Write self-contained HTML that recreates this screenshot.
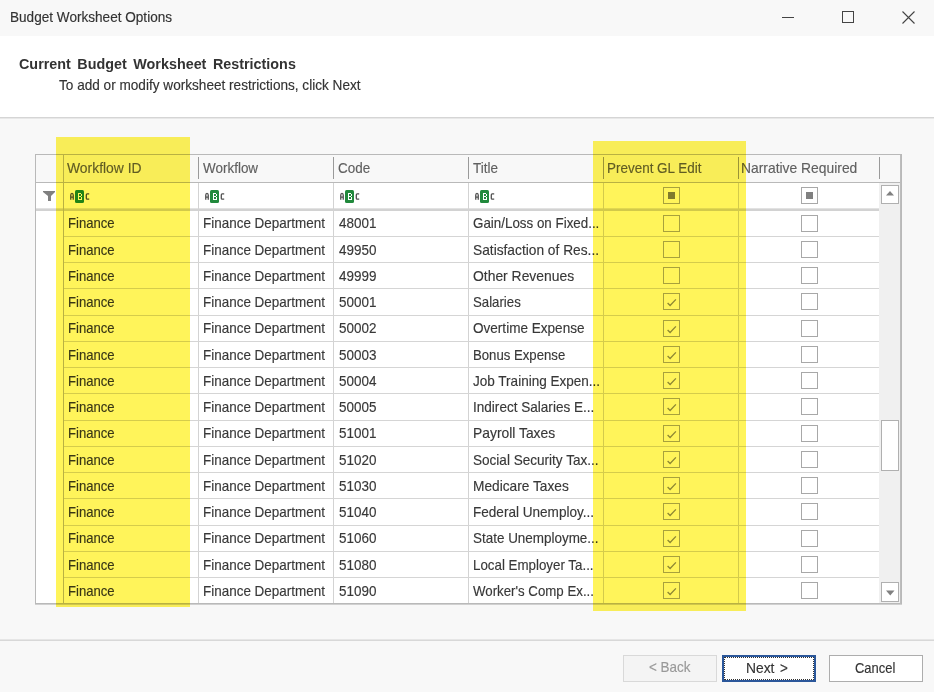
<!DOCTYPE html>
<html><head><meta charset="utf-8"><style>
html,body{margin:0;padding:0;width:934px;height:692px;overflow:hidden;background:#f8f8f8}
body{position:relative;font-family:"Liberation Sans",sans-serif}
.t{position:absolute;white-space:pre;line-height:normal;-webkit-text-stroke:0.15px currentColor}
</style></head><body>
<div style="position:absolute;left:0px;top:0px;width:934px;height:36px;background:#f8f8f8;"></div><div style="position:absolute;left:0px;top:36px;width:934px;height:81px;background:#ffffff;"></div><div style="position:absolute;left:0px;top:117px;width:934px;height:1px;background:#d5d5d5;"></div><div style="position:absolute;left:0px;top:118px;width:934px;height:574px;background:#f8f8f8;"></div><div style="position:absolute;left:0px;top:118px;width:934px;height:1px;background:#e8e8e8;"></div><div class="t" style="left:9.5px;top:9.23px;font-size:14.0px;color:#333;font-weight:normal;letter-spacing:0px;transform:scaleX(0.97);transform-origin:0 0;">Budget Worksheet Options</div><div style="position:absolute;left:782px;top:17px;width:12px;height:1px;background:#444;"></div><div style="position:absolute;left:842px;top:11px;width:10px;height:10px;border:1px solid #444"></div><svg style="position:absolute;left:0;top:0" width="934" height="692"><path d="M902.5,11.5 L914.5,23.5 M914.5,11.5 L902.5,23.5" stroke="#444" stroke-width="1.1" fill="none"/></svg><div class="t" style="left:19px;top:56.01px;font-size:14.8px;color:#333;font-weight:bold;letter-spacing:0px;transform:scaleX(0.97);transform-origin:0 0;word-spacing:2.6px;-webkit-text-stroke:0;">Current Budget Worksheet Restrictions</div><div class="t" style="left:59px;top:76.57px;font-size:14.4px;color:#333;font-weight:normal;letter-spacing:0px;transform:scaleX(0.945);transform-origin:0 0;">To add or modify worksheet restrictions, click Next</div><div style="position:absolute;left:35px;top:154px;width:867px;height:450px;background:#ffffff;box-sizing:border-box;border:1px solid #b9b9b9"></div><div style="position:absolute;left:36px;top:155px;width:865px;height:27px;background:#f8f8f8;"></div><div style="position:absolute;left:36px;top:182px;width:865px;height:1px;background:#b9b9b9;"></div><div style="position:absolute;left:36px;top:208px;width:843px;height:1px;background:#e2e2e2;"></div><div style="position:absolute;left:36px;top:209px;width:843px;height:2px;background:#d2d2d2;"></div><div style="position:absolute;left:63px;top:155px;width:1px;height:448px;background:#b9b9b9;"></div><div style="position:absolute;left:198px;top:157px;width:1px;height:22px;background:#9a9a9a;"></div><div style="position:absolute;left:333px;top:157px;width:1px;height:22px;background:#9a9a9a;"></div><div style="position:absolute;left:468px;top:157px;width:1px;height:22px;background:#9a9a9a;"></div><div style="position:absolute;left:603px;top:157px;width:1px;height:22px;background:#9a9a9a;"></div><div style="position:absolute;left:738px;top:157px;width:1px;height:22px;background:#9a9a9a;"></div><div style="position:absolute;left:879px;top:157px;width:1px;height:22px;background:#9a9a9a;"></div><div style="position:absolute;left:198px;top:183px;width:1px;height:420px;background:#d3d3d3;"></div><div style="position:absolute;left:333px;top:183px;width:1px;height:420px;background:#d3d3d3;"></div><div style="position:absolute;left:468px;top:183px;width:1px;height:420px;background:#d3d3d3;"></div><div style="position:absolute;left:603px;top:183px;width:1px;height:420px;background:#d3d3d3;"></div><div style="position:absolute;left:738px;top:183px;width:1px;height:420px;background:#d3d3d3;"></div><div style="position:absolute;left:64px;top:236px;width:815px;height:1px;background:#d5d5d5;"></div><div style="position:absolute;left:64px;top:262px;width:815px;height:1px;background:#d5d5d5;"></div><div style="position:absolute;left:64px;top:288px;width:815px;height:1px;background:#d5d5d5;"></div><div style="position:absolute;left:64px;top:315px;width:815px;height:1px;background:#d5d5d5;"></div><div style="position:absolute;left:64px;top:341px;width:815px;height:1px;background:#d5d5d5;"></div><div style="position:absolute;left:64px;top:367px;width:815px;height:1px;background:#d5d5d5;"></div><div style="position:absolute;left:64px;top:393px;width:815px;height:1px;background:#d5d5d5;"></div><div style="position:absolute;left:64px;top:420px;width:815px;height:1px;background:#d5d5d5;"></div><div style="position:absolute;left:64px;top:446px;width:815px;height:1px;background:#d5d5d5;"></div><div style="position:absolute;left:64px;top:472px;width:815px;height:1px;background:#d5d5d5;"></div><div style="position:absolute;left:64px;top:498px;width:815px;height:1px;background:#d5d5d5;"></div><div style="position:absolute;left:64px;top:525px;width:815px;height:1px;background:#d5d5d5;"></div><div style="position:absolute;left:64px;top:551px;width:815px;height:1px;background:#d5d5d5;"></div><div style="position:absolute;left:64px;top:577px;width:815px;height:1px;background:#d5d5d5;"></div><div style="position:absolute;left:879px;top:183px;width:21px;height:420px;background:#f0f0f0;"></div><div style="position:absolute;left:900px;top:155px;width:1px;height:449px;background:#bdbdbd;"></div><div style="position:absolute;left:35px;top:604px;width:867px;height:1px;background:#d0d0d0;"></div><div style="position:absolute;left:881px;top:185px;width:18px;height:19px;box-sizing:border-box;border:1px solid #b0b0b0;background:#fff"></div><div style="position:absolute;left:881px;top:420px;width:18px;height:51px;box-sizing:border-box;border:1px solid #b0b0b0;background:#fff"></div><div style="position:absolute;left:881px;top:582px;width:18px;height:20px;box-sizing:border-box;border:1px solid #b0b0b0;background:#fff"></div><svg style="position:absolute;left:0;top:0" width="934" height="692"><path d="M886,195.5 L894,195.5 L890,191 Z" fill="#808080"/><path d="M886,590.5 L894.5,590.5 L890.25,595.5 Z" fill="#808080"/><path d="M43,191 L55,191 L55,192 L51,196 L51,201 L48,201 L48,196 L43,192 Z" fill="#808080"/></svg><div class="t" style="left:67px;top:159.97px;font-size:14.4px;color:#606060;font-weight:normal;letter-spacing:0px;transform:scaleX(0.965);transform-origin:0 0;">Workflow ID</div><div class="t" style="left:202.5px;top:159.97px;font-size:14.4px;color:#606060;font-weight:normal;letter-spacing:0px;transform:scaleX(0.935);transform-origin:0 0;">Workflow</div><div class="t" style="left:337.5px;top:159.97px;font-size:14.4px;color:#606060;font-weight:normal;letter-spacing:0px;transform:scaleX(0.935);transform-origin:0 0;">Code</div><div class="t" style="left:472.5px;top:159.97px;font-size:14.4px;color:#606060;font-weight:normal;letter-spacing:0px;transform:scaleX(0.935);transform-origin:0 0;">Title</div><div class="t" style="left:606.5px;top:159.97px;font-size:14.4px;color:#606060;font-weight:normal;letter-spacing:0px;transform:scaleX(0.935);transform-origin:0 0;">Prevent GL Edit</div><div class="t" style="left:741px;top:159.97px;font-size:14.4px;color:#606060;font-weight:normal;letter-spacing:0px;transform:scaleX(0.963);transform-origin:0 0;">Narrative Required</div><svg style="position:absolute;left:70px;top:189px" width="20" height="14"><path d="M0.75,10.7 V6.3 Q0.75,4.3 2,4.3 Q3.25,4.3 3.25,6.3 V10.7 M0.75,8.1 H3.25" stroke="#505050" stroke-width="1.3" fill="none" shape-rendering="auto"/><rect x="5" y="1" width="9" height="13" rx="1.5" fill="#21893c"/><path d="M8,4h3v1h-3zM8,5h1v6h-1zM11,5h1v2h-1zM9,7h2v1h-2zM11,8h1v2h-1zM8,10h4v1h-4z" fill="#fff" shape-rendering="crispEdges"/><path d="M19.2,4.8 H17.2 Q16.3,4.8 16.3,6 V9.2 Q16.3,10.2 17.2,10.2 H19.2" stroke="#505050" stroke-width="1.3" fill="none" shape-rendering="auto"/></svg><svg style="position:absolute;left:205px;top:189px" width="20" height="14"><path d="M0.75,10.7 V6.3 Q0.75,4.3 2,4.3 Q3.25,4.3 3.25,6.3 V10.7 M0.75,8.1 H3.25" stroke="#505050" stroke-width="1.3" fill="none" shape-rendering="auto"/><rect x="5" y="1" width="9" height="13" rx="1.5" fill="#21893c"/><path d="M8,4h3v1h-3zM8,5h1v6h-1zM11,5h1v2h-1zM9,7h2v1h-2zM11,8h1v2h-1zM8,10h4v1h-4z" fill="#fff" shape-rendering="crispEdges"/><path d="M19.2,4.8 H17.2 Q16.3,4.8 16.3,6 V9.2 Q16.3,10.2 17.2,10.2 H19.2" stroke="#505050" stroke-width="1.3" fill="none" shape-rendering="auto"/></svg><svg style="position:absolute;left:340px;top:189px" width="20" height="14"><path d="M0.75,10.7 V6.3 Q0.75,4.3 2,4.3 Q3.25,4.3 3.25,6.3 V10.7 M0.75,8.1 H3.25" stroke="#505050" stroke-width="1.3" fill="none" shape-rendering="auto"/><rect x="5" y="1" width="9" height="13" rx="1.5" fill="#21893c"/><path d="M8,4h3v1h-3zM8,5h1v6h-1zM11,5h1v2h-1zM9,7h2v1h-2zM11,8h1v2h-1zM8,10h4v1h-4z" fill="#fff" shape-rendering="crispEdges"/><path d="M19.2,4.8 H17.2 Q16.3,4.8 16.3,6 V9.2 Q16.3,10.2 17.2,10.2 H19.2" stroke="#505050" stroke-width="1.3" fill="none" shape-rendering="auto"/></svg><svg style="position:absolute;left:475px;top:189px" width="20" height="14"><path d="M0.75,10.7 V6.3 Q0.75,4.3 2,4.3 Q3.25,4.3 3.25,6.3 V10.7 M0.75,8.1 H3.25" stroke="#505050" stroke-width="1.3" fill="none" shape-rendering="auto"/><rect x="5" y="1" width="9" height="13" rx="1.5" fill="#21893c"/><path d="M8,4h3v1h-3zM8,5h1v6h-1zM11,5h1v2h-1zM9,7h2v1h-2zM11,8h1v2h-1zM8,10h4v1h-4z" fill="#fff" shape-rendering="crispEdges"/><path d="M19.2,4.8 H17.2 Q16.3,4.8 16.3,6 V9.2 Q16.3,10.2 17.2,10.2 H19.2" stroke="#505050" stroke-width="1.3" fill="none" shape-rendering="auto"/></svg><div style="position:absolute;left:663px;top:187px;width:17px;height:17px;box-sizing:border-box;border:1px solid #a8a8a8;background:#fff"></div><div style="position:absolute;left:668px;top:192px;width:7px;height:7px;background:#808080;"></div><div style="position:absolute;left:801px;top:187px;width:17px;height:17px;box-sizing:border-box;border:1px solid #a8a8a8;background:#fff"></div><div style="position:absolute;left:806px;top:192px;width:7px;height:7px;background:#808080;"></div><div class="t" style="left:68px;top:215.27px;font-size:14.4px;color:#383838;font-weight:normal;letter-spacing:0px;transform:scaleX(0.91);transform-origin:0 0;">Finance</div><div class="t" style="left:203.4px;top:215.27px;font-size:14.4px;color:#383838;font-weight:normal;letter-spacing:0px;transform:scaleX(0.935);transform-origin:0 0;">Finance Department</div><div class="t" style="left:338.6px;top:215.27px;font-size:14.4px;color:#383838;font-weight:normal;letter-spacing:0px;transform:scaleX(0.935);transform-origin:0 0;">48001</div><div class="t" style="left:473.4px;top:215.27px;font-size:14.4px;color:#383838;font-weight:normal;letter-spacing:0px;transform:scaleX(0.929);transform-origin:0 0;">Gain/Loss on Fixed...</div><div style="position:absolute;left:663px;top:215px;width:17px;height:17px;box-sizing:border-box;border:1px solid #a8a8a8;background:#fff"></div><div style="position:absolute;left:801px;top:215px;width:17px;height:17px;box-sizing:border-box;border:1px solid #a8a8a8;background:#fff"></div><div class="t" style="left:68px;top:241.52px;font-size:14.4px;color:#383838;font-weight:normal;letter-spacing:0px;transform:scaleX(0.91);transform-origin:0 0;">Finance</div><div class="t" style="left:203.4px;top:241.52px;font-size:14.4px;color:#383838;font-weight:normal;letter-spacing:0px;transform:scaleX(0.935);transform-origin:0 0;">Finance Department</div><div class="t" style="left:338.6px;top:241.52px;font-size:14.4px;color:#383838;font-weight:normal;letter-spacing:0px;transform:scaleX(0.935);transform-origin:0 0;">49950</div><div class="t" style="left:473.4px;top:241.52px;font-size:14.4px;color:#383838;font-weight:normal;letter-spacing:0px;transform:scaleX(0.955);transform-origin:0 0;">Satisfaction of Res...</div><div style="position:absolute;left:663px;top:241px;width:17px;height:17px;box-sizing:border-box;border:1px solid #a8a8a8;background:#fff"></div><div style="position:absolute;left:801px;top:241px;width:17px;height:17px;box-sizing:border-box;border:1px solid #a8a8a8;background:#fff"></div><div class="t" style="left:68px;top:267.77px;font-size:14.4px;color:#383838;font-weight:normal;letter-spacing:0px;transform:scaleX(0.91);transform-origin:0 0;">Finance</div><div class="t" style="left:203.4px;top:267.77px;font-size:14.4px;color:#383838;font-weight:normal;letter-spacing:0px;transform:scaleX(0.935);transform-origin:0 0;">Finance Department</div><div class="t" style="left:338.6px;top:267.77px;font-size:14.4px;color:#383838;font-weight:normal;letter-spacing:0px;transform:scaleX(0.935);transform-origin:0 0;">49999</div><div class="t" style="left:473.4px;top:267.77px;font-size:14.4px;color:#383838;font-weight:normal;letter-spacing:0px;transform:scaleX(0.9655);transform-origin:0 0;">Other Revenues</div><div style="position:absolute;left:663px;top:267px;width:17px;height:17px;box-sizing:border-box;border:1px solid #a8a8a8;background:#fff"></div><div style="position:absolute;left:801px;top:267px;width:17px;height:17px;box-sizing:border-box;border:1px solid #a8a8a8;background:#fff"></div><div class="t" style="left:68px;top:294.02px;font-size:14.4px;color:#383838;font-weight:normal;letter-spacing:0px;transform:scaleX(0.91);transform-origin:0 0;">Finance</div><div class="t" style="left:203.4px;top:294.02px;font-size:14.4px;color:#383838;font-weight:normal;letter-spacing:0px;transform:scaleX(0.935);transform-origin:0 0;">Finance Department</div><div class="t" style="left:338.6px;top:294.02px;font-size:14.4px;color:#383838;font-weight:normal;letter-spacing:0px;transform:scaleX(0.935);transform-origin:0 0;">50001</div><div class="t" style="left:473.4px;top:294.02px;font-size:14.4px;color:#383838;font-weight:normal;letter-spacing:0px;transform:scaleX(0.9187);transform-origin:0 0;">Salaries</div><div style="position:absolute;left:663px;top:293px;width:17px;height:17px;box-sizing:border-box;border:1px solid #a8a8a8;background:#fff"></div><svg style="position:absolute;left:663px;top:293px" width="17" height="17"><path d="M4.6,10.1 L7.1,12.5 L12.9,6.4" stroke="#8e8e8e" stroke-width="1.35" fill="none"/></svg><div style="position:absolute;left:801px;top:293px;width:17px;height:17px;box-sizing:border-box;border:1px solid #a8a8a8;background:#fff"></div><div class="t" style="left:68px;top:320.27px;font-size:14.4px;color:#383838;font-weight:normal;letter-spacing:0px;transform:scaleX(0.91);transform-origin:0 0;">Finance</div><div class="t" style="left:203.4px;top:320.27px;font-size:14.4px;color:#383838;font-weight:normal;letter-spacing:0px;transform:scaleX(0.935);transform-origin:0 0;">Finance Department</div><div class="t" style="left:338.6px;top:320.27px;font-size:14.4px;color:#383838;font-weight:normal;letter-spacing:0px;transform:scaleX(0.935);transform-origin:0 0;">50002</div><div class="t" style="left:473.4px;top:320.27px;font-size:14.4px;color:#383838;font-weight:normal;letter-spacing:0px;transform:scaleX(0.9419);transform-origin:0 0;">Overtime Expense</div><div style="position:absolute;left:663px;top:320px;width:17px;height:17px;box-sizing:border-box;border:1px solid #a8a8a8;background:#fff"></div><svg style="position:absolute;left:663px;top:320px" width="17" height="17"><path d="M4.6,10.1 L7.1,12.5 L12.9,6.4" stroke="#8e8e8e" stroke-width="1.35" fill="none"/></svg><div style="position:absolute;left:801px;top:320px;width:17px;height:17px;box-sizing:border-box;border:1px solid #a8a8a8;background:#fff"></div><div class="t" style="left:68px;top:346.52px;font-size:14.4px;color:#383838;font-weight:normal;letter-spacing:0px;transform:scaleX(0.91);transform-origin:0 0;">Finance</div><div class="t" style="left:203.4px;top:346.52px;font-size:14.4px;color:#383838;font-weight:normal;letter-spacing:0px;transform:scaleX(0.935);transform-origin:0 0;">Finance Department</div><div class="t" style="left:338.6px;top:346.52px;font-size:14.4px;color:#383838;font-weight:normal;letter-spacing:0px;transform:scaleX(0.935);transform-origin:0 0;">50003</div><div class="t" style="left:473.4px;top:346.52px;font-size:14.4px;color:#383838;font-weight:normal;letter-spacing:0px;transform:scaleX(0.9147);transform-origin:0 0;">Bonus Expense</div><div style="position:absolute;left:663px;top:346px;width:17px;height:17px;box-sizing:border-box;border:1px solid #a8a8a8;background:#fff"></div><svg style="position:absolute;left:663px;top:346px" width="17" height="17"><path d="M4.6,10.1 L7.1,12.5 L12.9,6.4" stroke="#8e8e8e" stroke-width="1.35" fill="none"/></svg><div style="position:absolute;left:801px;top:346px;width:17px;height:17px;box-sizing:border-box;border:1px solid #a8a8a8;background:#fff"></div><div class="t" style="left:68px;top:372.77px;font-size:14.4px;color:#383838;font-weight:normal;letter-spacing:0px;transform:scaleX(0.91);transform-origin:0 0;">Finance</div><div class="t" style="left:203.4px;top:372.77px;font-size:14.4px;color:#383838;font-weight:normal;letter-spacing:0px;transform:scaleX(0.935);transform-origin:0 0;">Finance Department</div><div class="t" style="left:338.6px;top:372.77px;font-size:14.4px;color:#383838;font-weight:normal;letter-spacing:0px;transform:scaleX(0.935);transform-origin:0 0;">50004</div><div class="t" style="left:473.4px;top:372.77px;font-size:14.4px;color:#383838;font-weight:normal;letter-spacing:0px;transform:scaleX(0.9403);transform-origin:0 0;">Job Training Expen...</div><div style="position:absolute;left:663px;top:372px;width:17px;height:17px;box-sizing:border-box;border:1px solid #a8a8a8;background:#fff"></div><svg style="position:absolute;left:663px;top:372px" width="17" height="17"><path d="M4.6,10.1 L7.1,12.5 L12.9,6.4" stroke="#8e8e8e" stroke-width="1.35" fill="none"/></svg><div style="position:absolute;left:801px;top:372px;width:17px;height:17px;box-sizing:border-box;border:1px solid #a8a8a8;background:#fff"></div><div class="t" style="left:68px;top:399.02px;font-size:14.4px;color:#383838;font-weight:normal;letter-spacing:0px;transform:scaleX(0.91);transform-origin:0 0;">Finance</div><div class="t" style="left:203.4px;top:399.02px;font-size:14.4px;color:#383838;font-weight:normal;letter-spacing:0px;transform:scaleX(0.935);transform-origin:0 0;">Finance Department</div><div class="t" style="left:338.6px;top:399.02px;font-size:14.4px;color:#383838;font-weight:normal;letter-spacing:0px;transform:scaleX(0.935);transform-origin:0 0;">50005</div><div class="t" style="left:473.4px;top:399.02px;font-size:14.4px;color:#383838;font-weight:normal;letter-spacing:0px;transform:scaleX(0.9422);transform-origin:0 0;">Indirect Salaries E...</div><div style="position:absolute;left:663px;top:398px;width:17px;height:17px;box-sizing:border-box;border:1px solid #a8a8a8;background:#fff"></div><svg style="position:absolute;left:663px;top:398px" width="17" height="17"><path d="M4.6,10.1 L7.1,12.5 L12.9,6.4" stroke="#8e8e8e" stroke-width="1.35" fill="none"/></svg><div style="position:absolute;left:801px;top:398px;width:17px;height:17px;box-sizing:border-box;border:1px solid #a8a8a8;background:#fff"></div><div class="t" style="left:68px;top:425.27px;font-size:14.4px;color:#383838;font-weight:normal;letter-spacing:0px;transform:scaleX(0.91);transform-origin:0 0;">Finance</div><div class="t" style="left:203.4px;top:425.27px;font-size:14.4px;color:#383838;font-weight:normal;letter-spacing:0px;transform:scaleX(0.935);transform-origin:0 0;">Finance Department</div><div class="t" style="left:338.6px;top:425.27px;font-size:14.4px;color:#383838;font-weight:normal;letter-spacing:0px;transform:scaleX(0.935);transform-origin:0 0;">51001</div><div class="t" style="left:473.4px;top:425.27px;font-size:14.4px;color:#383838;font-weight:normal;letter-spacing:0px;transform:scaleX(0.9629);transform-origin:0 0;">Payroll Taxes</div><div style="position:absolute;left:663px;top:425px;width:17px;height:17px;box-sizing:border-box;border:1px solid #a8a8a8;background:#fff"></div><svg style="position:absolute;left:663px;top:425px" width="17" height="17"><path d="M4.6,10.1 L7.1,12.5 L12.9,6.4" stroke="#8e8e8e" stroke-width="1.35" fill="none"/></svg><div style="position:absolute;left:801px;top:425px;width:17px;height:17px;box-sizing:border-box;border:1px solid #a8a8a8;background:#fff"></div><div class="t" style="left:68px;top:451.52px;font-size:14.4px;color:#383838;font-weight:normal;letter-spacing:0px;transform:scaleX(0.91);transform-origin:0 0;">Finance</div><div class="t" style="left:203.4px;top:451.52px;font-size:14.4px;color:#383838;font-weight:normal;letter-spacing:0px;transform:scaleX(0.935);transform-origin:0 0;">Finance Department</div><div class="t" style="left:338.6px;top:451.52px;font-size:14.4px;color:#383838;font-weight:normal;letter-spacing:0px;transform:scaleX(0.935);transform-origin:0 0;">51020</div><div class="t" style="left:473.4px;top:451.52px;font-size:14.4px;color:#383838;font-weight:normal;letter-spacing:0px;transform:scaleX(0.9419);transform-origin:0 0;">Social Security Tax...</div><div style="position:absolute;left:663px;top:451px;width:17px;height:17px;box-sizing:border-box;border:1px solid #a8a8a8;background:#fff"></div><svg style="position:absolute;left:663px;top:451px" width="17" height="17"><path d="M4.6,10.1 L7.1,12.5 L12.9,6.4" stroke="#8e8e8e" stroke-width="1.35" fill="none"/></svg><div style="position:absolute;left:801px;top:451px;width:17px;height:17px;box-sizing:border-box;border:1px solid #a8a8a8;background:#fff"></div><div class="t" style="left:68px;top:477.77px;font-size:14.4px;color:#383838;font-weight:normal;letter-spacing:0px;transform:scaleX(0.91);transform-origin:0 0;">Finance</div><div class="t" style="left:203.4px;top:477.77px;font-size:14.4px;color:#383838;font-weight:normal;letter-spacing:0px;transform:scaleX(0.935);transform-origin:0 0;">Finance Department</div><div class="t" style="left:338.6px;top:477.77px;font-size:14.4px;color:#383838;font-weight:normal;letter-spacing:0px;transform:scaleX(0.935);transform-origin:0 0;">51030</div><div class="t" style="left:473.4px;top:477.77px;font-size:14.4px;color:#383838;font-weight:normal;letter-spacing:0px;transform:scaleX(0.9525);transform-origin:0 0;">Medicare Taxes</div><div style="position:absolute;left:663px;top:477px;width:17px;height:17px;box-sizing:border-box;border:1px solid #a8a8a8;background:#fff"></div><svg style="position:absolute;left:663px;top:477px" width="17" height="17"><path d="M4.6,10.1 L7.1,12.5 L12.9,6.4" stroke="#8e8e8e" stroke-width="1.35" fill="none"/></svg><div style="position:absolute;left:801px;top:477px;width:17px;height:17px;box-sizing:border-box;border:1px solid #a8a8a8;background:#fff"></div><div class="t" style="left:68px;top:504.02px;font-size:14.4px;color:#383838;font-weight:normal;letter-spacing:0px;transform:scaleX(0.91);transform-origin:0 0;">Finance</div><div class="t" style="left:203.4px;top:504.02px;font-size:14.4px;color:#383838;font-weight:normal;letter-spacing:0px;transform:scaleX(0.935);transform-origin:0 0;">Finance Department</div><div class="t" style="left:338.6px;top:504.02px;font-size:14.4px;color:#383838;font-weight:normal;letter-spacing:0px;transform:scaleX(0.935);transform-origin:0 0;">51040</div><div class="t" style="left:473.4px;top:504.02px;font-size:14.4px;color:#383838;font-weight:normal;letter-spacing:0px;transform:scaleX(0.9422);transform-origin:0 0;">Federal Unemploy...</div><div style="position:absolute;left:663px;top:503px;width:17px;height:17px;box-sizing:border-box;border:1px solid #a8a8a8;background:#fff"></div><svg style="position:absolute;left:663px;top:503px" width="17" height="17"><path d="M4.6,10.1 L7.1,12.5 L12.9,6.4" stroke="#8e8e8e" stroke-width="1.35" fill="none"/></svg><div style="position:absolute;left:801px;top:503px;width:17px;height:17px;box-sizing:border-box;border:1px solid #a8a8a8;background:#fff"></div><div class="t" style="left:68px;top:530.27px;font-size:14.4px;color:#383838;font-weight:normal;letter-spacing:0px;transform:scaleX(0.91);transform-origin:0 0;">Finance</div><div class="t" style="left:203.4px;top:530.27px;font-size:14.4px;color:#383838;font-weight:normal;letter-spacing:0px;transform:scaleX(0.935);transform-origin:0 0;">Finance Department</div><div class="t" style="left:338.6px;top:530.27px;font-size:14.4px;color:#383838;font-weight:normal;letter-spacing:0px;transform:scaleX(0.935);transform-origin:0 0;">51060</div><div class="t" style="left:473.4px;top:530.27px;font-size:14.4px;color:#383838;font-weight:normal;letter-spacing:0px;transform:scaleX(0.9342);transform-origin:0 0;">State Unemployme...</div><div style="position:absolute;left:663px;top:530px;width:17px;height:17px;box-sizing:border-box;border:1px solid #a8a8a8;background:#fff"></div><svg style="position:absolute;left:663px;top:530px" width="17" height="17"><path d="M4.6,10.1 L7.1,12.5 L12.9,6.4" stroke="#8e8e8e" stroke-width="1.35" fill="none"/></svg><div style="position:absolute;left:801px;top:530px;width:17px;height:17px;box-sizing:border-box;border:1px solid #a8a8a8;background:#fff"></div><div class="t" style="left:68px;top:556.52px;font-size:14.4px;color:#383838;font-weight:normal;letter-spacing:0px;transform:scaleX(0.91);transform-origin:0 0;">Finance</div><div class="t" style="left:203.4px;top:556.52px;font-size:14.4px;color:#383838;font-weight:normal;letter-spacing:0px;transform:scaleX(0.935);transform-origin:0 0;">Finance Department</div><div class="t" style="left:338.6px;top:556.52px;font-size:14.4px;color:#383838;font-weight:normal;letter-spacing:0px;transform:scaleX(0.935);transform-origin:0 0;">51080</div><div class="t" style="left:473.4px;top:556.52px;font-size:14.4px;color:#383838;font-weight:normal;letter-spacing:0px;transform:scaleX(0.9264);transform-origin:0 0;">Local Employer Ta...</div><div style="position:absolute;left:663px;top:556px;width:17px;height:17px;box-sizing:border-box;border:1px solid #a8a8a8;background:#fff"></div><svg style="position:absolute;left:663px;top:556px" width="17" height="17"><path d="M4.6,10.1 L7.1,12.5 L12.9,6.4" stroke="#8e8e8e" stroke-width="1.35" fill="none"/></svg><div style="position:absolute;left:801px;top:556px;width:17px;height:17px;box-sizing:border-box;border:1px solid #a8a8a8;background:#fff"></div><div class="t" style="left:68px;top:582.77px;font-size:14.4px;color:#383838;font-weight:normal;letter-spacing:0px;transform:scaleX(0.91);transform-origin:0 0;">Finance</div><div class="t" style="left:203.4px;top:582.77px;font-size:14.4px;color:#383838;font-weight:normal;letter-spacing:0px;transform:scaleX(0.935);transform-origin:0 0;">Finance Department</div><div class="t" style="left:338.6px;top:582.77px;font-size:14.4px;color:#383838;font-weight:normal;letter-spacing:0px;transform:scaleX(0.935);transform-origin:0 0;">51090</div><div class="t" style="left:473.4px;top:582.77px;font-size:14.4px;color:#383838;font-weight:normal;letter-spacing:0px;transform:scaleX(0.9219);transform-origin:0 0;">Worker&#x27;s Comp Ex...</div><div style="position:absolute;left:663px;top:582px;width:17px;height:17px;box-sizing:border-box;border:1px solid #a8a8a8;background:#fff"></div><svg style="position:absolute;left:663px;top:582px" width="17" height="17"><path d="M4.6,10.1 L7.1,12.5 L12.9,6.4" stroke="#8e8e8e" stroke-width="1.35" fill="none"/></svg><div style="position:absolute;left:801px;top:582px;width:17px;height:17px;box-sizing:border-box;border:1px solid #a8a8a8;background:#fff"></div><div style="position:absolute;left:0px;top:639px;width:934px;height:1px;background:#e6e6e6;"></div><div style="position:absolute;left:0px;top:640px;width:934px;height:1px;background:#d8d8d8;"></div><div style="position:absolute;left:623px;top:655px;width:94px;height:27px;box-sizing:border-box;border:1px solid #d9d9d9;background:#f4f4f4"></div><div style="position:absolute;left:722px;top:655px;width:94px;height:27px;box-sizing:border-box;border:2px solid #2b579a;background:#fff"></div><div style="position:absolute;left:724px;top:657px;width:90px;height:23px;box-sizing:border-box;border:1px dotted #333"></div><div style="position:absolute;left:829px;top:655px;width:94px;height:27px;box-sizing:border-box;border:1px solid #adadad;background:#fff"></div><div class="t" style="left:649.2px;top:659.37px;font-size:14.4px;color:#999;font-weight:normal;letter-spacing:0px;transform:scaleX(0.935);transform-origin:0 0;">&lt; Back</div><div class="t" style="left:745.5px;top:659.97px;font-size:14.4px;color:#333;font-weight:normal;letter-spacing:0px;transform:scaleX(0.96);transform-origin:0 0;">Next</div><div class="t" style="left:779.8px;top:659.97px;font-size:14.4px;color:#333;font-weight:normal;letter-spacing:0px;transform:scaleX(0.935);transform-origin:0 0;">&gt;</div><div class="t" style="left:854.8px;top:659.57px;font-size:14.4px;color:#333;font-weight:normal;letter-spacing:0px;transform:scaleX(0.9);transform-origin:0 0;">Cancel</div><div style="position:absolute;left:56px;top:137px;width:134px;height:470px;background:#fff45a;mix-blend-mode:multiply"></div><div style="position:absolute;left:593px;top:141px;width:153px;height:470px;background:#fff45a;mix-blend-mode:multiply"></div>
</body></html>
